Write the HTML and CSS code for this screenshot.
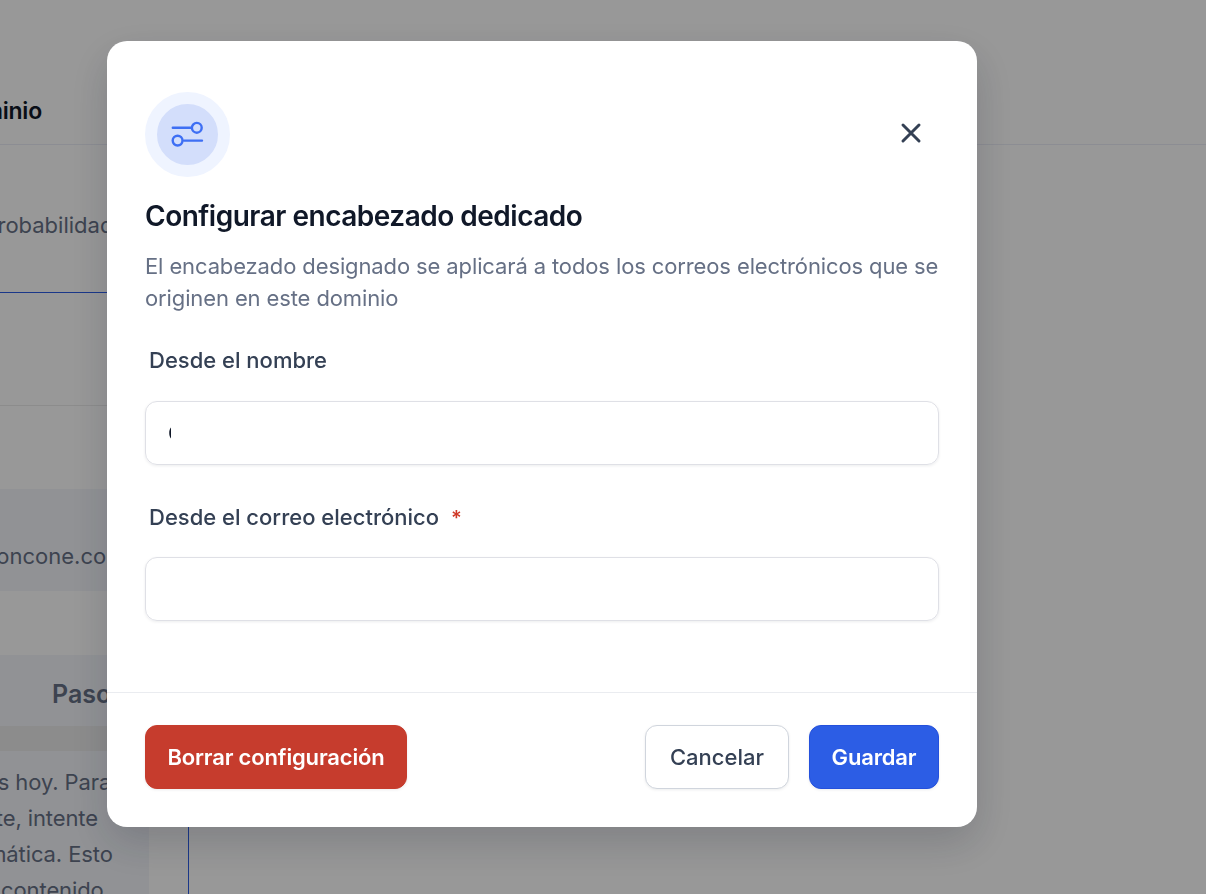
FILE: index.html
```html
<!DOCTYPE html>
<html lang="es">
<head>
    <meta charset="UTF-8">
    <meta name="viewport" content="width=device-width, initial-scale=1.0">
    <title>Configurar encabezado dedicado</title>
    <link rel="stylesheet" href="styles.css">
</head>
<body>
    <main class="page">
        <header class="page-header">
            <h1>Dominio</h1>
        </header>
        <section class="notice"><p>probabilidad</p></section>
        <div class="domain-info"></div>
        <div class="domain-row"><span>moncone.com</span></div>
        <div class="steps">
            <div class="steps-head">Paso</div>
            <div class="steps-gap"></div>
            <div class="steps-body">
                <p>es hoy. Para</p>
                <p class="line-2">mente, intente</p>
                <p class="line-3">automática. Esto</p>
                <p class="line-4">el contenido</p>
            </div>
        </div>
    </main>

    <div class="overlay">
        <div class="modal" role="dialog" aria-labelledby="modal-title">
            <div class="modal-content">
                <div class="modal-top">
                    <div class="modal-icon">
                        <svg width="34" height="28" viewBox="0 0 34 28" fill="none" stroke="currentColor" stroke-width="2.4" stroke-linecap="round">
                            <path d="M1.8 6.8H20.5M13 19.6H31"/>
                            <circle cx="25.8" cy="6.8" r="4.9"/>
                            <circle cx="6.6" cy="19.6" r="4.9"/>
                        </svg>
                    </div>
                    <button class="close-btn" aria-label="Cerrar">
                        <svg width="22" height="22" viewBox="0 0 22 22" fill="none" stroke="currentColor" stroke-width="3" stroke-linecap="round">
                            <path d="M3 3L19 19M19 3L3 19"/>
                        </svg>
                    </button>
                </div>
                <h2 id="modal-title">Configurar encabezado dedicado</h2>
                <p class="description">El encabezado designado se aplicará a todos los correos electrónicos que se originen en este dominio</p>

                <div class="field">
                    <div class="label">Desde el nombre</div>
                    <div class="input"><span class="value">C</span></div>
                </div>
                <div class="field">
                    <div class="label">Desde el correo electrónico <span class="required">*</span></div>
                    <div class="input"></div>
                </div>
            </div>
            <div class="modal-footer">
                <button class="btn btn-danger">Borrar configuración</button>
                <div class="actions">
                    <button class="btn btn-cancel">Cancelar</button>
                    <button class="btn btn-primary">Guardar</button>
                </div>
            </div>
        </div>
    </div>
</body>
</html>
```
FILE: styles.css
```css
:root {
    --text-dark: #101828;
    --text-label: #344054;
    --text-muted: #667085;
    --blue: #2c5de5;
    --red: #c63c2d;
    --border: #dfe0e6;
    --shadow: 0 1px 3px rgba(16, 24, 40, 0.08);
}

* {
    box-sizing: border-box;
}

body {
    margin: 0;
    height: 894px;
    overflow: hidden;
    font-family: Inter, "Liberation Sans", sans-serif;
    font-size: 22px;
    color: var(--text-dark);
    background: #fdfdfd;
}

h1, h2, p {
    margin: 0;
}

/* page behind the dialog */
.page-header {
    display: flex;
    justify-content: flex-end;
    align-items: flex-end;
    height: 145px;
    padding-bottom: 19px;
    padding-right: 1164px;
    border-bottom: 1px solid #eaecf5;
}

.page-header h1 {
    font-size: 23px;
    line-height: 28px;
    font-weight: 600;
    letter-spacing: -0.2px;
}

.notice {
    width: 189px;
    height: 148px;
    padding-top: 64px;
    color: var(--text-muted);
    line-height: 32px;
    border-bottom: 1px solid var(--blue);
}

.notice p {
    margin-left: -16px;
}

.domain-info {
    width: 189px;
    height: 113px;
    border-bottom: 1px solid #eaeaea;
}

.domain-row {
    width: 189px;
    height: 102px;
    margin-top: 83px;
    padding-top: 51px;
    line-height: 32px;
    color: var(--text-muted);
    background: #f2f4f9;
}

.domain-row span {
    margin-left: -23px;
}

.steps {
    width: 189px;
    height: 239px;
    margin-top: 64px;
    border-right: 1px solid var(--blue);
}

.steps-head {
    width: 149px;
    height: 71px;
    padding-left: 52px;
    font-size: 25px;
    font-weight: 600;
    line-height: 78px;
    color: var(--text-muted);
    background: #f2f4f9;
}

.steps-gap {
    width: 149px;
    height: 25px;
    background: #eaeaea;
}

.steps-body {
    width: 149px;
    height: 143px;
    padding-top: 13px;
    line-height: 36px;
    letter-spacing: -0.1px;
    white-space: nowrap;
    overflow: hidden;
    color: var(--text-muted);
    background: #f2f4f9;
}

.steps-body p {
    margin-left: -15px;
}

.steps-body .line-2 {
    margin-left: -49px;
}

.steps-body .line-3 {
    margin-left: -58px;
}

.steps-body .line-4 {
    margin-left: -23px;
}

/* dialog */
.overlay {
    position: fixed;
    inset: 0;
    padding: 41px 0 0 107px;
    background: rgba(0, 0, 0, 0.4);
}

.modal {
    display: flex;
    flex-direction: column;
    width: 870px;
    height: 786px;
    background: #fff;
    border-radius: 20px;
    box-shadow: 0 16px 40px rgba(16, 24, 40, 0.18);
}

.modal-content {
    flex: 1;
    padding: 51px 38px 0;
}

.modal-top {
    display: flex;
    justify-content: space-between;
    height: 85px;
}

.modal-icon {
    display: flex;
    align-items: center;
    justify-content: center;
    width: 85px;
    height: 85px;
    border: 12px solid #eff4ff;
    border-radius: 50%;
    background: #d3defb;
    color: #3e6ff4;
}

.close-btn {
    display: flex;
    align-self: center;
    margin: 0 17px 3px 0;
    padding: 0;
    border: none;
    background: none;
    color: var(--text-label);
}

.modal h2 {
    margin-top: 21px;
    font-size: 28px;
    line-height: 36px;
    font-weight: 600;
    letter-spacing: -0.5px;
}

.description {
    margin-top: 16px;
    line-height: 32px;
    letter-spacing: -0.12px;
    color: var(--text-muted);
}

.field {
    margin-top: 30px;
}

.field + .field {
    margin-top: 36px;
}

.label {
    padding-left: 4px;
    line-height: 32px;
    font-weight: 500;
    color: var(--text-label);
}

.required {
    margin-left: 6px;
    font-size: 20px;
    font-weight: 600;
    line-height: 1;
    color: #d03a29;
}

.input {
    display: flex;
    align-items: center;
    height: 64px;
    margin-top: 25px;
    padding-left: 22px;
    border: 1px solid var(--border);
    border-radius: 12px;
    box-shadow: var(--shadow);
}

.field + .field .input {
    margin-top: 24px;
}

.value {
    width: 3px;
    overflow: hidden;
    font-weight: 500;
}

.modal-footer {
    display: flex;
    justify-content: space-between;
    height: 135px;
    padding: 32px 38px 0;
    border-top: 1px solid #eaecf0;
}

.actions {
    display: flex;
    gap: 20px;
}

.btn {
    height: 64px;
    padding: 0;
    border: 1px solid transparent;
    border-radius: 12px;
    font-family: inherit;
    font-size: 22px;
    font-weight: 600;
    letter-spacing: -0.15px;
    box-shadow: var(--shadow);
}

.btn-danger {
    width: 262px;
    color: #fff;
    background: var(--red);
    border-color: var(--red);
}

.btn-cancel {
    width: 144px;
    font-weight: 500;
    letter-spacing: 0;
    color: var(--text-label);
    background: #fff;
    border-color: #d0d5dd;
}

.btn-primary {
    width: 130px;
    color: #fff;
    background: var(--blue);
    border-color: #2450dc;
}
```
